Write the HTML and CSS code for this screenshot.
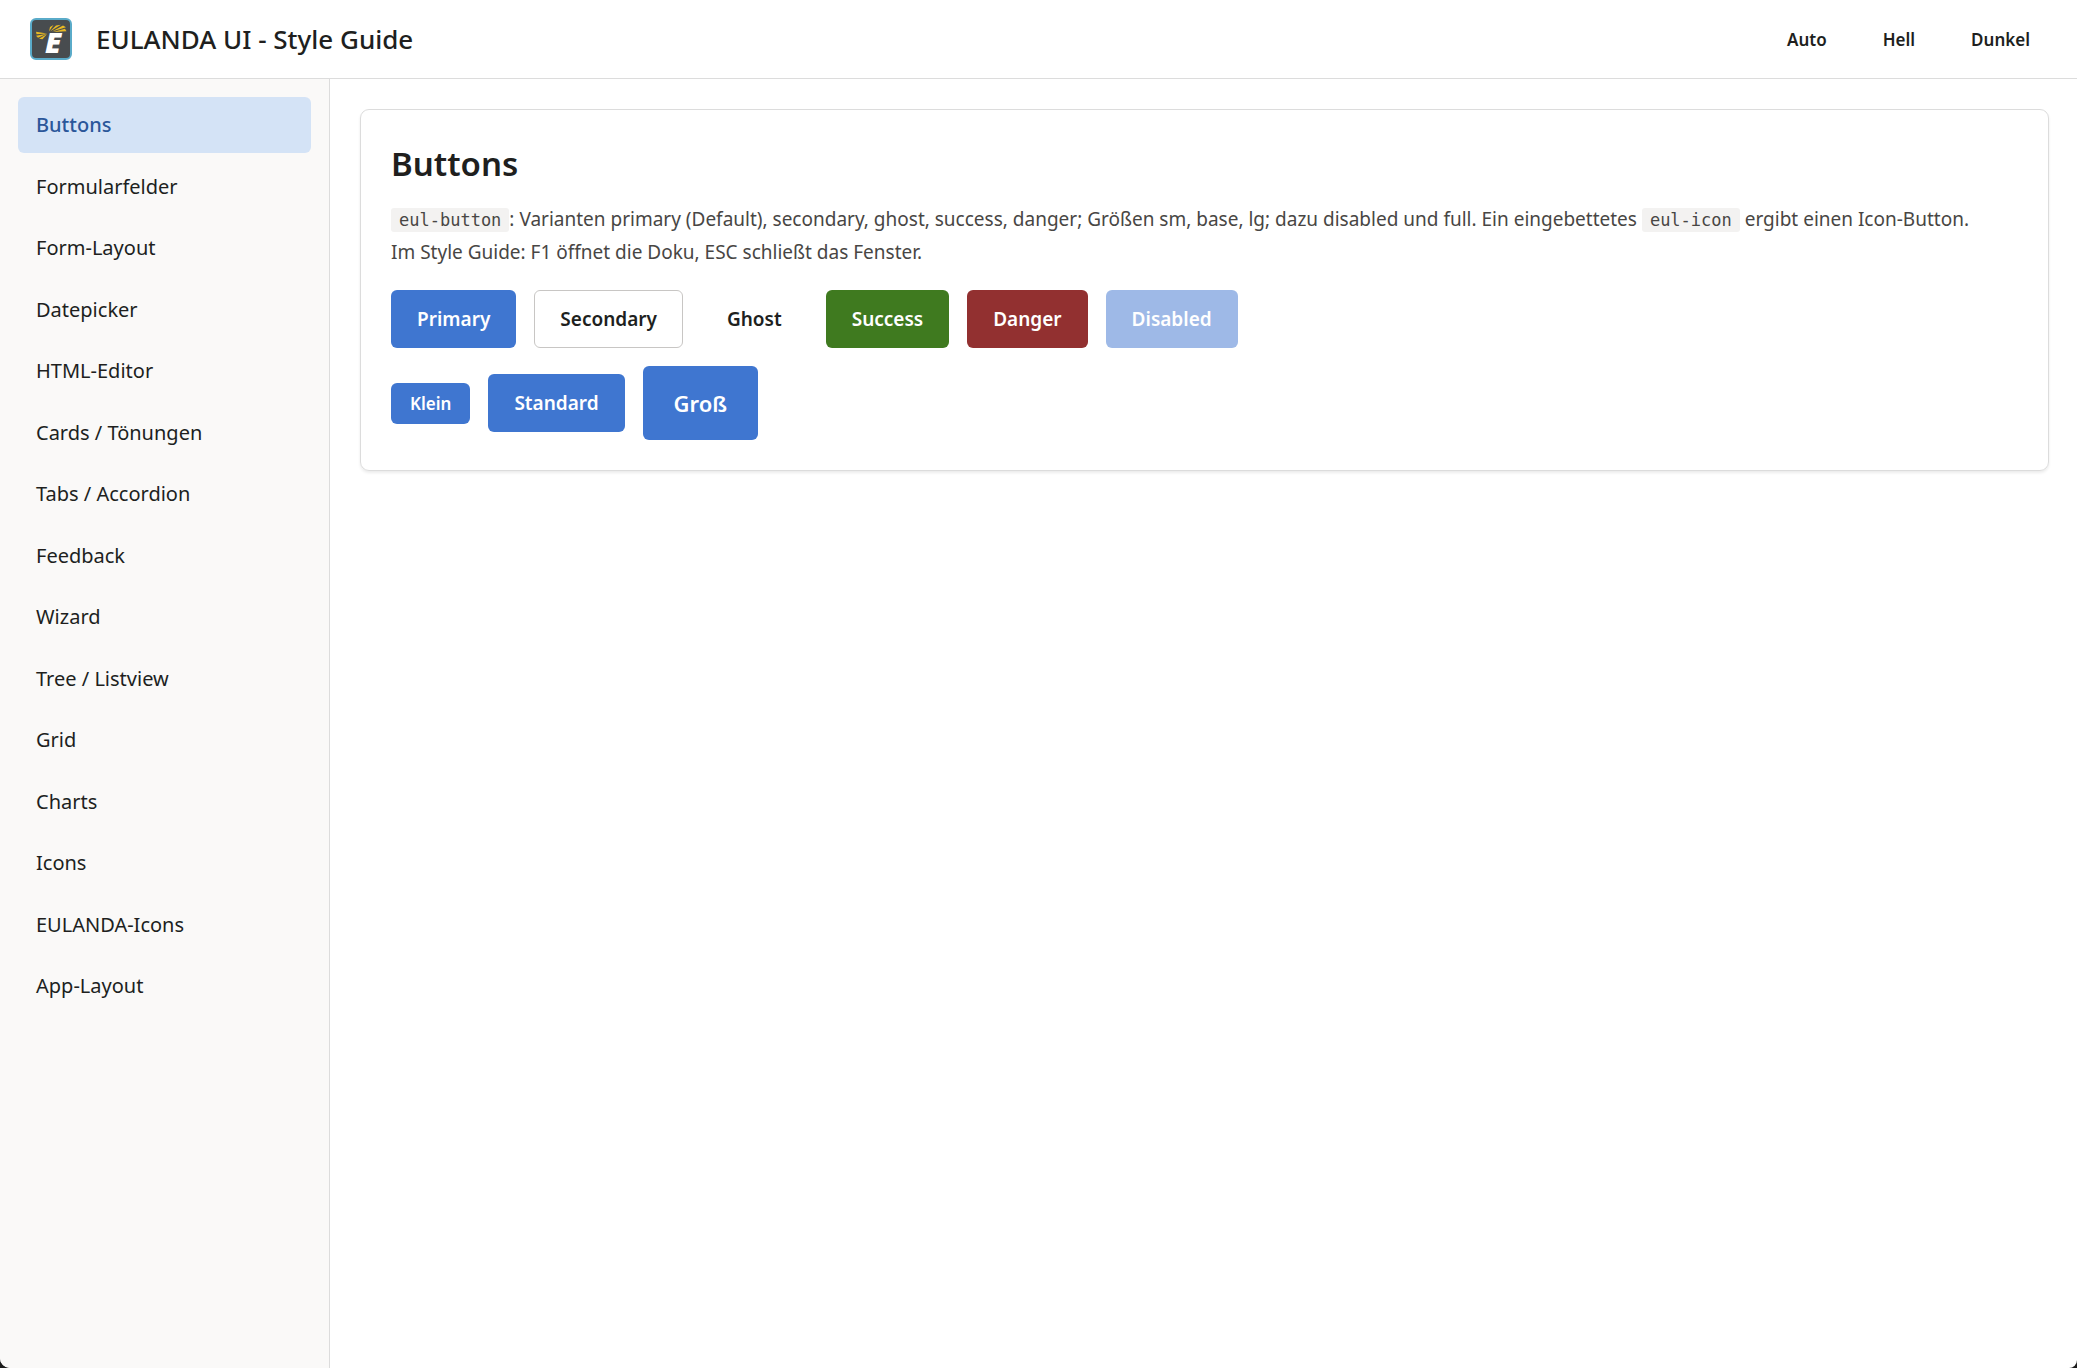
FILE: index.html
```
<!DOCTYPE html>
<html lang="de">
<head>
<meta charset="utf-8">
<meta name="viewport" content="width=device-width, initial-scale=1">
<title>EULANDA UI - Style Guide</title>
<link rel="stylesheet" href="styles.css">
</head>
<body>
<div class="app">
  <header class="header">
    <svg class="logo" viewBox="0 0 42 42" aria-hidden="true">
      <rect x="1" y="1" width="40" height="40" rx="5" fill="#484c4f" stroke="#5aabc9" stroke-width="2"/>
      <g fill="#e8b923">
        <path d="M19 13.500 20 9 23.500 7z"/>
        <path d="M20 13.500 26 7.500 31 6.800z"/>
        <path d="M22 13.500 33 7.500 36 9.200z"/>
        <path d="M23 14 35 10.800 36.500 13.200z"/>
        <path d="M17 15.500 6 13.800 6.500 16.200z"/>
        <path d="M17 15.800 6 17.800 8 19.800z"/>
        <path d="M17 16 9 20.800 12.500 21.300z"/>
      </g>
      <text class="logo-letter" x="15" y="35">E</text>
    </svg>
    <h1 class="title">EULANDA UI - Style Guide</h1>
    <div class="themes">
      <button class="button ghost small" type="button">Auto</button>
      <button class="button ghost small" type="button">Hell</button>
      <button class="button ghost small" type="button">Dunkel</button>
    </div>
  </header>
  <div class="body">
    <nav class="sidebar">
      <ul class="nav-list">
        <li><a class="nav-link active" href="#buttons" aria-current="page">Buttons</a></li>
        <li><a class="nav-link" href="#formularfelder">Formularfelder</a></li>
        <li><a class="nav-link" href="#form-layout">Form-Layout</a></li>
        <li><a class="nav-link" href="#datepicker">Datepicker</a></li>
        <li><a class="nav-link" href="#html-editor">HTML-Editor</a></li>
        <li><a class="nav-link" href="#cards">Cards / Tönungen</a></li>
        <li><a class="nav-link" href="#tabs">Tabs / Accordion</a></li>
        <li><a class="nav-link" href="#feedback">Feedback</a></li>
        <li><a class="nav-link" href="#wizard">Wizard</a></li>
        <li><a class="nav-link" href="#tree">Tree / Listview</a></li>
        <li><a class="nav-link" href="#grid">Grid</a></li>
        <li><a class="nav-link" href="#charts">Charts</a></li>
        <li><a class="nav-link" href="#icons">Icons</a></li>
        <li><a class="nav-link" href="#eulanda-icons">EULANDA-Icons</a></li>
        <li><a class="nav-link" href="#app-layout">App-Layout</a></li>
      </ul>
    </nav>
    <main class="main">
      <section class="card" id="buttons">
        <h2 class="heading">Buttons</h2>
        <p class="intro"><code>eul-button</code>: Varianten primary (Default), secondary, ghost, success, danger; Größen sm, base, lg; dazu disabled und full. Ein eingebettetes <code>eul-icon</code> ergibt einen Icon-Button.<br>Im Style Guide: F1 öffnet die Doku, ESC schließt das Fenster.</p>
        <div class="row">
          <button class="button" type="button">Primary</button>
          <button class="button secondary" type="button">Secondary</button>
          <button class="button ghost" type="button">Ghost</button>
          <button class="button success" type="button">Success</button>
          <button class="button danger" type="button">Danger</button>
          <button class="button" type="button" disabled>Disabled</button>
        </div>
        <div class="row">
          <button class="button small" type="button">Klein</button>
          <button class="button" type="button">Standard</button>
          <button class="button large" type="button">Groß</button>
        </div>
      </section>
    </main>
  </div>
</div>
</body>
</html>
```
FILE: styles.css
```
* {
  box-sizing: border-box;
}

html {
  background: #1c1c1c;
}

body {
  margin: 0;
  font-family: "Noto Sans", "Open Sans", sans-serif;
  font-size: 20px;
  line-height: 32px;
  color: #201f1e;
}

.app {
  display: flex;
  flex-direction: column;
  min-height: 100vh;
  background: #fff;
  border-radius: 0 0 8px 10px;
  overflow: hidden;
}

.header {
  display: flex;
  align-items: center;
  gap: 24px;
  height: 79px;
  padding: 0 28px 0 30px;
  border-bottom: 1px solid #dcdcdc;
}

.logo {
  width: 42px;
  height: 42px;
}

.logo-letter {
  font: italic 800 29px "Open Sans", sans-serif;
  fill: #fff;
}

.title {
  margin: 0;
  font-size: 26px;
  font-weight: 500;
}

.themes {
  display: flex;
  gap: 18px;
  margin-left: auto;
}

.body {
  display: flex;
  flex: 1;
}

.sidebar {
  flex: 0 0 330px;
  padding: 18px;
  background: #faf9f8;
  border-right: 1px solid #dcdcdc;
}

.nav-list {
  display: grid;
  align-content: space-between;
  min-height: 917px;
  margin: 0;
  padding: 0;
  list-style: none;
}

.nav-link {
  display: block;
  padding: 12px 18px;
  border-radius: 6px;
  color: inherit;
  text-decoration: none;
}

.nav-link.active {
  background: #d4e3f6;
  color: #2b579a;
  font-weight: 500;
}

.main {
  flex: 1;
  min-width: 0;
  padding: 30px 28px 30px 30px;
}

.card {
  display: flex;
  flex-direction: column;
  gap: 18px;
  padding: 30px;
  border: 1px solid #dcdcdc;
  border-radius: 9px;
  box-shadow: 0 2px 3px rgba(0, 0, 0, 0.08);
}

.heading {
  margin: 0;
  font-size: 33px;
  font-weight: 600;
  line-height: 48px;
}

.intro {
  margin: -3px 0 4px;
  font-size: 19px;
  color: #484644;
}

code {
  padding: 2px 8px;
  background: #f3f2f1;
  border-radius: 3px;
  font-family: "DejaVu Sans Mono", monospace;
  font-size: 17px;
}

.row {
  display: flex;
  flex-wrap: wrap;
  align-items: center;
  gap: 18px;
}

.button {
  padding: 12px 25px;
  border: 1px solid transparent;
  border-radius: 6px;
  background: #3f76d0;
  color: #fff;
  font: 600 19px/32px "Noto Sans", "Open Sans", sans-serif;
}

.button.secondary {
  background: #fff;
  border-color: #c8c6c4;
  color: #201f1e;
}

.button.ghost {
  background: transparent;
  color: #201f1e;
}

.button.success {
  background: #3f7a1f;
}

.button.danger {
  background: #923030;
}

.button:disabled {
  opacity: 0.5;
}

.button.small {
  padding: 7px 18px;
  font-size: 17px;
  line-height: 25px;
}

.button.large {
  padding: 18px 30px;
  font-size: 22px;
  line-height: 36px;
}
```
